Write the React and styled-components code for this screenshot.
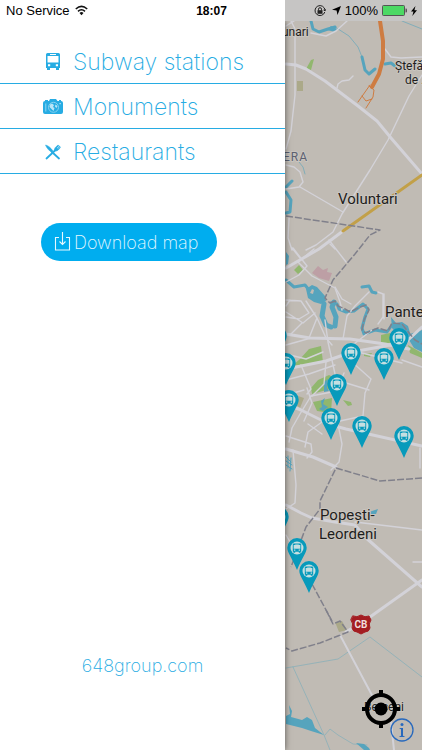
import React from 'react'
import styled, { createGlobalStyle } from 'styled-components'

const blue = '#27ace3'
const drawerWidth = '285px'
const thinFont = 'Inter, "Open Sans", sans-serif'

const GlobalStyle = createGlobalStyle`
    * {
        box-sizing: border-box;
    }
    body {
        margin: 0;
        background: #fff;
        font-family: "Liberation Sans", Arial, sans-serif;
    }
`

const Screen = styled.div`
    display: flex;
    flex-direction: column;
    min-height: 100vh;
    overflow: hidden;
`

const StatusBar = styled.header`
    display: grid;
    grid-template-columns: 1fr auto 1fr;
    align-items: center;
    height: 21px;
    padding: 0 5px 0 6px;
    font-size: 13px;
    color: #000;
    background: linear-gradient(to right, #fff ${drawerWidth}, #c6c5c4 ${drawerWidth});
`

const StatusGroup = styled.div`
    display: flex;
    align-items: center;
    justify-content: ${props => props.$end ? 'flex-end' : 'flex-start'};
    gap: ${props => props.$end ? '4px' : '5px'};
`

const Time = styled.time`
    font-size: 12px;
    font-weight: bold;
`

const Body = styled.div`
    display: flex;
    flex: 1;
`

const Drawer = styled.aside`
    display: flex;
    flex-direction: column;
    flex: 0 0 ${drawerWidth};
    padding-top: 18px;
    background: #fff;
    z-index: 1;
    box-shadow: 0 0 6px rgba(0, 0, 0, .55);
    clip-path: inset(0 -12px 0 0);
`

const MenuLink = styled.a`
    display: flex;
    align-items: center;
    gap: 7px;
    height: 45px;
    padding: 2px 0 0 43px;
    border-bottom: 1px solid ${blue};
    color: ${blue};
    font: 200 23px ${thinFont};
    text-decoration: none;
    white-space: nowrap;
`

const DownloadButton = styled.button`
    display: flex;
    align-items: center;
    align-self: flex-start;
    gap: 3px;
    height: 38px;
    margin: 49px 0 0 41px;
    padding: 0 19px 0 13px;
    border: 0;
    border-radius: 19px;
    background: #00adef;
    color: #e6f8ff;
    font: 200 18px ${thinFont};
    white-space: nowrap;
`

const SiteLink = styled.a`
    margin: auto auto 73px;
    color: ${blue};
    font: 200 18px/22px ${thinFont};
    text-decoration: none;
`

const Map = styled.main`
    position: relative;
    flex: 1;
    min-width: 0;
    overflow: hidden;
    background: #c0bbb4;
`

const MapCanvas = styled.svg`
    position: absolute;
    width: 100%;
    height: 100%;
    fill: none;
    stroke-linecap: round;
    stroke-linejoin: round;
`

const Road = styled.path`
    stroke: ${props => props.$color || '#d3d2d8'};
    stroke-width: ${props => props.$width || 1.4};
`

const Water = styled.path`
    stroke: #56a4bd;
    stroke-width: ${props => props.$width || 1};
`

const Lake = styled.path`
    fill: #56a4bd;
`

const Park = styled.path`
    fill: ${props => props.$color || '#91b76e'};
`

const Border = styled.path`
    stroke: #80808b;
    stroke-width: 1.5;
    stroke-dasharray: 7 2;
    stroke-linecap: butt;
`

const Place = styled.text`
    fill: ${props => props.$color || '#1f1e1d'};
    stroke: #c9c5bf;
    stroke-width: 2;
    paint-order: stroke;
    font: ${props => props.$small ? 12 : 15}px Roboto, sans-serif;
`

const PinButton = styled.button`
    position: absolute;
    left: ${props => props.$x - 10}px;
    top: ${props => props.$y - 10}px;
    width: 20px;
    height: 32px;
    padding: 0;
    border: 0;
    background: none;
`

const MapControl = styled.button`
    position: absolute;
    right: ${props => props.$right};
    bottom: ${props => props.$bottom};
    display: flex;
    padding: 0;
    border: 0;
    background: none;
`

function BusShape () {
  return (
    <path fillRule='evenodd' d='M2.500 0h11a1.500 1.500 0 0 1 1.500 1.500V15h-1v2h-3v-2H5v2H2v-2H1V1.500A1.500 1.500 0 0 1 2.500 0zM2.500 3v6.500h11V3zM3 11.300v2h2.200v-2zm7.800 0v2H13v-2zM5 1v1h6V1z' />
  )
}

function BusIcon () {
  return (
    <svg width='23' height='18' viewBox='-2 0 23 18' fill={blue}>
      <BusShape />
    </svg>
  )
}

function CameraIcon () {
  return (
    <svg width='23' height='18' viewBox='0 0 23 18'>
      <path fill={blue} d='M2 3V2h3v1h1l1-2h6l1.500 2H16V2h2v1a2 2 0 0 1 2 2v9a2 2 0 0 1-2 2H2a2 2 0 0 1-2-2V5a2 2 0 0 1 2-2z' />
      <circle cx='10.500' cy='9.300' r='5' fill={blue} stroke='#8fd5f1' strokeWidth='.9' />
      <path fill='#b9e5f7' d='M7 6.500l2-1 2 1.500-1 2 1.500 1-1 3L8 10.500 6.500 9zM12.500 6.500l2 1.500-1 2-1.500-1.500zM2.500 5.500h.7v8h-.7zM16.500 5h1.300v1.300h-1.300z' />
    </svg>
  )
}

function CutleryIcon () {
  return (
    <svg width='23' height='18' viewBox='0 0 23 18' fill='none' stroke={blue}>
      <path strokeWidth='1.800' strokeLinecap='round' d='M3.500 15.500L12.500 7M9 9l7 6.500' />
      <path fill={blue} strokeWidth='.5' d='M2.500 2c2.500.3 5.500 3 7.500 6l-1.500 1.300C6.500 8 3.500 5 2.500 2zM11.500 7.500C11 5.500 12.500 4 15 2l2.500 2c-1.500 2.800-3.200 4.500-5.500 4z' />
      <path stroke='#fff' strokeWidth='.5' d='M14 5L16 3M14.800 5.800l2-2' />
    </svg>
  )
}

function DownloadIcon () {
  return (
    <svg width='17' height='22' viewBox='0 0 17 22' fill='none' stroke='#e6f8ff' strokeWidth='1.100'>
      <path d='M5 6.500H1.500V19h14V6.500H12M8.500 1v12.500M5.500 10.500l3 3 3-3' />
    </svg>
  )
}

function WifiIcon () {
  return (
    <svg width='13' height='11' viewBox='0 0 13 11' fill='none' stroke='#111' strokeWidth='1.600'>
      <path d='M.8 4Q6.500-1.200 12.200 4M3 6.300Q6.500 3.200 10 6.300' />
      <path fill='#111' stroke='none' d='M4.500 8Q6.500 6.200 8.500 8l-2 2.300z' />
    </svg>
  )
}

function LockIcon () {
  return (
    <svg width='12' height='12' viewBox='0 0 12 12' fill='none' stroke='#222'>
      <path d='M10.800 7A5 5 0 1 1 11 5.300M9.500 5l1.600.8.800-1.600' />
      <path d='M4.500 5.500V4.200a1.500 1.500 0 0 1 3 0v1.300' />
      <path fill='#222' stroke='none' d='M3.500 5.200h5v3.600h-5z' />
    </svg>
  )
}

function ArrowIcon () {
  return (
    <svg width='11' height='9' viewBox='-2 0 11 9'>
      <path d='M9 0L5.500 9 4.600 4.600 0 3.800z' />
    </svg>
  )
}

function BatteryIcon () {
  return (
    <svg width='25' height='11' viewBox='0 0 25 11'>
      <rect x='.5' y='.5' width='22' height='10' rx='1' fill='#4cd964' stroke='#555' />
      <path fill='#555' d='M23.500 3.500h.5a1 1 0 0 1 1 1v2a1 1 0 0 1-1 1h-.5z' />
    </svg>
  )
}

function BoltIcon () {
  return (
    <svg width='6' height='10' viewBox='0 0 6 10'>
      <path d='M4.500 0L0 5.500h2.500L1.300 10 6 4.200H3.400z' />
    </svg>
  )
}

function Pin ({ x, y }) {
  return (
    <PinButton $x={x} $y={y} aria-label='Subway station'>
      <svg width='20' height='32' viewBox='0 0 20 32'>
        <path fill='#079abb' d='M10 0a9.700 9.700 0 0 1 9.700 9.800C19.700 14.500 15.500 19 10 32 4.500 19 .3 14.500 .3 9.800A9.700 9.700 0 0 1 10 0z' />
        <circle cx='10' cy='10' r='6.500' fill='#c5dfe1' />
        <g fill='#079abb' transform='translate(5.200 5.400) scale(.6 .55)'>
          <BusShape />
        </g>
      </svg>
    </PinButton>
  )
}

// centre of the pin head on the map
const pins = [
  [-8, 315], [114, 317], [66, 332], [99, 337], [1, 342],
  [52, 363], [4, 379], [46, 397], [77, 405], [119, 415],
  [-6, 496], [12, 527], [24, 550]
]

const streets = [
  'M286 26l8-5M291 21l4 8v66l-4 36-5 18M311 33l15 3 10-5 11-10M337 88l1-4 4-3 7-1 4-4',
  'M385 49l6 8 10 1 21-1M422 75l-13 21-21 44-18 30-28 44-9 18-17 13-10 5',
  'M286 165l8 2 6 5 3 10-4 5-13 2M300 187l43 25M330 244l5 5',
  'M289 218l-1 20 4 12M314 249l-16 13 14 14 23 12 5 14 2 8M329 240l17 22M300 258l-8-10M286 282l13-7 8-9-14-18',
  'M286 300l15 1 8 12-10 6-13-2M290 300l-4 6M286 312l17 11 12-10M302 323l-12 12M309 338l8-20-11-17M317 318l9 20M326 338l6 7',
  'M325 320l3 22 7 32M343 339l4-23 8-10 14-14M378 292l5 2v23l-5 7M384 294v25M372 330l-22 17M335 287l7 12 9 5',
  'M301 365l10 24-4 5M326 362l-2 22-12 12M352 362l19 17-6 14-2 23-23 5M307 388l5 15-8 18',
  'M286 395l18-5M311 396l26-5 7-18M343 382l26 8',
  'M311 396l-11 18-8 14-3 14M338 424l4 20-3 18-8 8',
  'M286 436l25 8 1 8-5 6M308 424l14 10M322 422l-14 10-3 15M293 450l3 35-1 18-9 6M420 448v20',
  'M355 522l67 8M413 562h9M286 535l7 12M286 354l20 5 17-7M286 345l25-7M286 380l23-6 26-9M402 360l20 7M350 350l52 13'
]

const mainRoads = [
  'M286 64l10 1 10 4 19 12 33 25 19 15 14 17 37 43',
  'M343 231l-24 18-33 19', 'M286 334l24 4 40 1 35 5 24 5',
  'M286 369l40-8 26-9 33-6 22-5 15-14',
  'M286 404l15 6 30 15 15 4 76 17', 'M286 449l27 8 23 10',
  'M286 505l15 8 11 5 23 4 20 3 10 12 57 50', 'M422 580l-52 37-24 15'
]

function MapDrawing () {
  return (
    <MapCanvas aria-hidden='true'>
      <g transform='translate(-285 -21)'>
        <Park d='M311 60l3-1-3 11-5-1zM294 270l5-5 4 5-5 4zM300 359l9-10 12-3 2 16-20 3-11 1zM381 335l9-2 6 9-15 2zM408 345l14 8v5l-12-5zM311 388l7-8 11-5 6 3-1 10-22 6zM313 402l19-4-1 15-14-2zM343 400l8 2 1 3-4 1zM364 354l8-1-2 4-6-1z' />
        <Park $color='#aba989' d='M297 81h6v10h-6zM335 622l7-1 5 9-8 2zM298 396l6 2-4 10-5-4z' />
        <Park $color='#bd9fa5' d='M312 273l6-7 5 4 5-2-1 4 5 1-3 8-10-3z' />

        <Water d='M335 27l14 9 9 11 4 10M402 21l20 8M299 162l4 5 2 7' opacity='.6' />
        <Water $width={3} d='M311 21l2 8 6 3 9-3 7-2M362 57l3 13 4 4 6-5M286 187l6-6M286 192l5 8-1 12-4 1M286 280l8 7 11-2 4 5M362 287l7-1 3 6 4 1' />
        <Water d='M385 64l6-1 4 3' $width={3} />
        <Lake d='M331 26l6 3-2 3-8-2zM286 252l3 4-1 8-2 1zM306 289l6-4 5 2 8 9 1 5-5 3-7-2-6-4zM391 317l5 6 6-1 6 4 3 10-10 4-9-12zM410 334l12-4v22l-8-4-5-8zM324 382l4-3-1 9 2 3-5 1zM321 401l4-3-2 6 5 3-5 4-4-2 3-2zM369 512l9-3-2 5-7 1z' />
        <Water $width={5} d='M324 304l-2 12 4 9 5 2M335 326l1-9-4-10 2-5' />
        <Park d='M312 289l2 1-1 4-3-1z' $color='#c0bbb4' />
        <Water $width={3} d='M331 303l6 1 2 5 7 3 8-1 9-7 5 5-3 8-3 11 2 6 11-4 12 2 5-7' />
        <Water d='M286 457l5 5M286 461l6 4M286 465l6 4M288 456v12M291 458l-1 13' />
        <Water d='M286 668l52-9 32-22 52 40M293 667l31 68 6 15M325 735l5-6 8 6 15 9 14 1' opacity='.4' />
        <Lake d='M286 716l4-2-1-9 3 6-1 6 11 3 5-3 5 3 3 8 9 7-13-4-9-3-8-2-8-2zM356 743l8 1 5 4 1 2h-6z' />

        {streets.map(d => <Road key={d} d={d} />)}
        {mainRoads.map(d => <Road key={d} d={d} $width={3} />)}
        <Road $width={2} d='M340 635l34 64M391 722l3 28' />
        <Road $color='#c2a048' $width={3} d='M422 175l-79 56' />
        <Road $color='#ce7c42' $width={4} d='M380 21l3 20v18l-4 15-7 13' />
        <Road $color='#ce7c42' $width={1} d='M370 85l-12 17M369 86l5 4-1 7-7 11M362 96l4 5 6-2' />

        <Border d='M286 216l54 8 40 6-10 5-15 19-22 26-8 18 5 5' />
        <Border d='M330 303l5-2 3 5 7 3 5 3 10-5 6-2 3 5-5 10-2 10 4 3 12-5 10 3 4-8 10 1 7 9 6 7 7 4' />
        <Border d='M422 478l-42 3-44-13-16 33v8l-14 18-15 40M312 584l20 37' />
        <Border d='M326 610l7 14 7-3 8 11-28 11-28 8-6-3' />

        <Place $small x='282' y='36'>unari</Place>
        <Place $small x='395' y='70'>Ștefă</Place>
        <Place $small x='405' y='84'>de .</Place>
        <Place $small $color='#5c6171' x='283' y='161' letterSpacing='1'>ERA</Place>
        <Place x='338' y='204'>Voluntari</Place>
        <Place x='385' y='317'>Pante</Place>
        <Place x='320' y='520'>Popești-</Place>
        <Place x='319' y='539'>Leordeni</Place>
        <Place $small x='364' y='711'>Berceni</Place>

        <path fill='#a41d22' d='M353 616q4 2 8-1 4 3 8 1l2 4q-3 4-1 8-1 4-5 4l-4 2-4-2q-4 0-5-4 2-4-1-8z' stroke='#a41d22' />
        <text x='361' y='628' fill='#f0dede' textAnchor='middle' fontFamily='Roboto, sans-serif' fontSize='10' fontWeight='700'>CB</text>
      </g>
    </MapCanvas>
  )
}

export default function App () {
  return (
    <Screen>
      <GlobalStyle />
      <StatusBar>
        <StatusGroup>
          <span>No Service</span>
          <WifiIcon />
        </StatusGroup>
        <Time>18:07</Time>
        <StatusGroup $end>
          <LockIcon />
          <ArrowIcon />
          <span>100%</span>
          <BatteryIcon />
          <BoltIcon />
        </StatusGroup>
      </StatusBar>

      <Body>
        <Drawer>
          <nav>
            <MenuLink href='#stations'><BusIcon />Subway stations</MenuLink>
            <MenuLink href='#monuments'><CameraIcon />Monuments</MenuLink>
            <MenuLink href='#restaurants'><CutleryIcon />Restaurants</MenuLink>
          </nav>
          <DownloadButton><DownloadIcon />Download map</DownloadButton>
          <SiteLink href='#site'>648group.com</SiteLink>
        </Drawer>

        <Map>
          <MapDrawing />
          {pins.map(([x, y]) => <Pin key={`${x}-${y}`} x={x} y={y} />)}
          <MapControl $right='22px' $bottom='22px' aria-label='My location'>
            <svg width='38' height='38' viewBox='0 0 38 38' fill='none' stroke='#000' strokeWidth='4'>
              <circle cx='19' cy='19' r='14' />
              <circle cx='19' cy='19' r='6.500' fill='#000' stroke='none' />
              <path d='M19 0v6M19 32v6M0 19h6M32 19h6' />
            </svg>
          </MapControl>
          <MapControl $right='8px' $bottom='8px' aria-label='Map information'>
            <svg width='24' height='24' viewBox='0 0 24 24'>
              <circle cx='12' cy='12' r='11' fill='none' stroke='#2869bd' strokeWidth='1.300' />
              <circle cx='12' cy='6.500' r='1.500' fill='#2869bd' />
              <path fill='#2869bd' d='M9.500 10h3.500v7.800l1.700.7v.5h-5.400v-.5l1.700-.7v-6.500l-1.500-.8z' />
            </svg>
          </MapControl>
        </Map>
      </Body>
    </Screen>
  )
}
